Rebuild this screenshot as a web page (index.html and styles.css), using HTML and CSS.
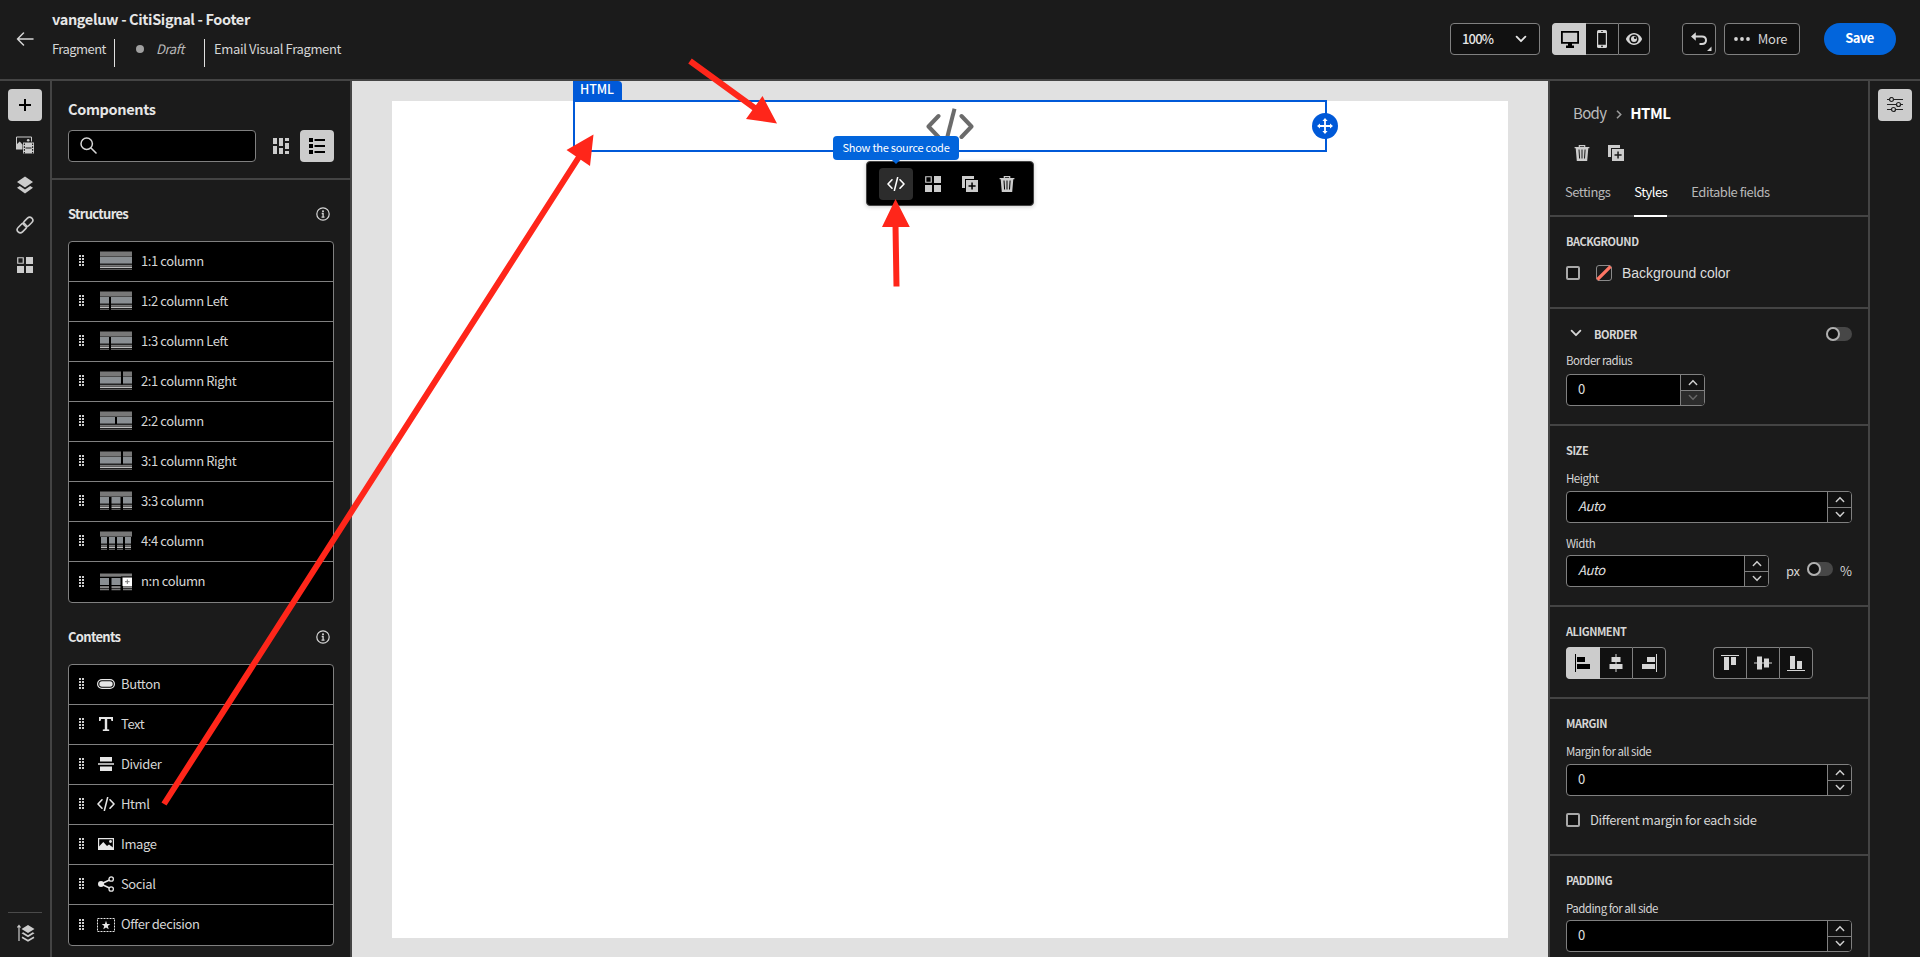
FILE: index.html
```html
<!DOCTYPE html>
<html lang="en">
<head>
<meta charset="utf-8">
<title>vangeluw - CitiSignal - Footer</title>
<link rel="stylesheet" href="styles.css">
</head>
<body>
<svg class="defs" aria-hidden="true">
  <symbol id="code" viewBox="0 0 18 14"><path d="M5 2.8 1 7l4 4.2M13 2.8 17 7l-4 4.2M10.6.6 7.4 13.4" fill="none" stroke="currentColor" stroke-width="1.6" stroke-linecap="round" stroke-linejoin="round"/></symbol>
  <symbol id="frags" viewBox="0 0 16 16"><path d="M.75.75h5.5v5.5H.75z" fill="none" stroke="currentColor" stroke-width="1.2"/><path d="M9 0h7v7H9zM0 9h7v7H0zM9 9h7v7H9z" fill="currentColor"/></symbol>
  <symbol id="dup" viewBox="0 0 16 16"><path fill="currentColor" d="M0 0h12v3H3v9H0z"/><path fill="currentColor" fill-rule="evenodd" d="M4 4h12v12H4zM9.3 6.5v2.8H6.5v1.5h2.8v2.8h1.5v-2.8h2.8V9.300h-2.800V6.500z"/></symbol>
  <symbol id="trash" viewBox="0 0 16 16"><path d="M5.300 2V.7h5.400V2" fill="none" stroke="currentColor" stroke-width="1.200"/><path fill="currentColor" fill-rule="evenodd" d="M.6 2h14.800v1.300h-1.100L13.200 16H2.800L1.700 3.300H.6zM4.500 4.500l.6 9h1l-.6-9zM7.500 4.500v9h1v-9zM10.600 4.500l-.6 9h1l.6-9z"/></symbol>
  <symbol id="chev" viewBox="0 0 12 8"><path d="m1.600 1.600 4.400 4.600 4.400-4.600" fill="none" stroke="currentColor" stroke-width="1.800" stroke-linecap="round" stroke-linejoin="round"/></symbol>
  <symbol id="info" viewBox="0 0 14 14"><circle cx="7" cy="7" r="6.200" fill="none" stroke="currentColor" stroke-width="1.200"/><circle cx="7" cy="4.200" r="1" fill="currentColor"/><path d="M5.700 6.500h1.400v3.500M5.500 10.200h3" fill="none" stroke="currentColor" stroke-width="1.300"/></symbol>
  <symbol id="grip" viewBox="0 0 5 11"><path fill="currentColor" d="M0 0h2v2H0zM3 0h2v2H3zM0 3h2v2H0zM3 3h2v2H3zM0 6h2v2H0zM3 6h2v2H3zM0 9h2v2H0zM3 9h2v2H3z"/></symbol>
  <symbol id="thumb" viewBox="0 0 32 19"><path fill="#787878" d="M0 .5h32v4.500H0z"/><path fill="#4a4a4a" d="M0 5h32v1H0zM0 12.500h32v1H0z"/><path fill="#8a8f93" d="M0 6h32v6.500H0z"/><path fill="#777" d="M0 14h32v1H0zM0 17.700h32v1H0z"/><path fill="#eee" d="M0 15.600h32v1.200H0z"/></symbol>
</svg>

<header class="topbar">
  <svg class="back" viewBox="0 0 18 14"><path d="M17 7H1.500M7.500 1l-6 6 6 6" fill="none" stroke="currentColor" stroke-width="1.500" stroke-linecap="round" stroke-linejoin="round"/></svg>
  <div class="heading">
    <h1 class="title">vangeluw - CitiSignal - Footer</h1>
    <div class="meta">
      <span class="meta-kind">Fragment</span>
      <span class="meta-state"><i class="dot"></i><em>Draft</em></span>
      <span class="meta-type">Email Visual Fragment</span>
    </div>
  </div>
  <div class="actions">
    <button class="btn zoom"><span>100%</span><svg width="12" height="8"><use href="#chev"/></svg></button>
    <div class="group views">
      <button class="seg on"><svg width="18" height="17" viewBox="0 0 18 17"><path fill="none" stroke="#000" stroke-width="1.800" d="M.9.9h16.200v11H.9z"/><path d="M7 12h4v2.500h2V17H5v-2.500h2z"/></svg></button>
      <button class="seg"><svg width="10" height="18" viewBox="0 0 10 18"><rect width="10" height="18" rx="1.500" fill="currentColor"/><path fill="#111" d="M1.200 3h7.600v11.800H1.200zM4 1.200h2v.8H4z"/><circle cx="5" cy="16.300" r=".9" fill="#111"/></svg></button>
      <button class="seg last"><svg width="16" height="12" viewBox="0 0 16 12"><path fill="currentColor" d="M8 0C3.500 0 0 4.500 0 6s3.500 6 8 6 8-4.500 8-6-3.500-6-8-6z"/><circle cx="8" cy="6" r="4.600" fill="#111"/><circle cx="8" cy="6" r="3" fill="currentColor"/><circle cx="9.200" cy="4.800" r="1.300" fill="#111"/></svg></button>
    </div>
    <button class="btn undo"><svg width="22" height="20" viewBox="0 0 22 20"><path d="M5 4.500h7c2.400 0 4 1.600 4 3.700 0 2.200-1.600 3.700-4 3.700H9.500" fill="none" stroke="currentColor" stroke-width="2"/><path fill="currentColor" d="M1 4.500 5.800.3v8.400zM21.500 14.500V19H17z"/></svg></button>
    <button class="btn more"><svg width="16" height="4" viewBox="0 0 16 4"><circle cx="2" cy="2" r="1.900" fill="currentColor"/><circle cx="8" cy="2" r="1.900" fill="currentColor"/><circle cx="14" cy="2" r="1.900" fill="currentColor"/></svg><span>More</span></button>
    <button class="save">Save</button>
  </div>
</header>

<main class="workspace">
  <nav class="rail">
    <button class="rail-on"><svg width="12" height="12" viewBox="0 0 12 12"><path d="M6 0v12M0 6h12" stroke="#000" stroke-width="2"/></svg></button>
    <svg class="rail-icon" viewBox="0 0 18 17"><path d="M.5 12.500V.5h15V5" fill="none" stroke="currentColor"/><circle cx="12.200" cy="3.700" r="1.300" fill="currentColor"/><path fill="currentColor" d="M0 8.500 3.700 5 6.500 8v5H0z"/><path fill="currentColor" d="M7 6h11v11H7z"/><path stroke="#1b1b1b" stroke-width="1" d="M9.500 11.500h6"/><path stroke="#1b1b1b" stroke-width="1.100" stroke-dasharray="1.600 1.200" d="M8.400 7V17M16.600 7V17"/></svg>
    <svg class="rail-icon" viewBox="0 0 18 18"><path fill="currentColor" d="M9 .5 17 6 9 11.500 1 6zM1 11.800l2.800-1.900L9 13.500l5.200-3.600 2.800 1.900-8 5.600z"/></svg>
    <svg class="rail-icon" viewBox="0 0 18 18"><g fill="none" stroke="currentColor" stroke-width="1.600" transform="rotate(-45 9 9)"><rect x="-.7" y="5.900" width="10.400" height="6.200" rx="3.100"/><rect x="8.300" y="5.900" width="10.400" height="6.200" rx="3.100"/></g></svg>
    <svg class="rail-icon small"><use href="#frags"/></svg>
    <div class="rail-foot"><svg width="18" height="18" viewBox="0 0 18 18"><path d="M2 17V2M.4 3.500 2 1.500l1.600 2" fill="none" stroke="currentColor" stroke-width="1.200"/><path fill="currentColor" d="M11 1l6.500 4-6.500 4-6.500-4zM4.500 9.300l1.800-1 4.700 2.900 4.700-2.900 1.800 1L11 13.200z"/><path d="m5 13.300 6 3.500 6-3.500" fill="none" stroke="currentColor" stroke-width="1.600"/></svg></div>
  </nav>

  <aside class="components">
    <div class="comp-head">
      <h2 class="title">Components</h2>
      <div class="search-row">
        <div class="search"><svg width="17" height="17" viewBox="0 0 17 17"><circle cx="6.700" cy="6.700" r="5.700" fill="none" stroke="currentColor" stroke-width="1.500"/><path d="m11 11 5 5" stroke="currentColor" stroke-width="1.600" stroke-linecap="round"/></svg></div>
        <svg class="grid-icon" viewBox="0 0 16 16"><path fill="currentColor" d="M0 0h4v6H0zM0 8h4v8H0zM6 0h4v8H6zM6 10h4v6H6zM12 0h4v3h-4zM12 5h4v6h-4zM12 13h4v3h-4z"/></svg>
        <button class="list-btn"><svg width="16" height="16" viewBox="0 0 16 16"><path d="M0 0h4v4H0zM0 6h4v4H0zM0 12h4v4H0zM5.500 1H16v2H5.500zM5.500 7H16v2H5.500zM5.500 13H16v2H5.500z"/></svg></button>
      </div>
    </div>
    <div class="sect-head"><h3>Structures</h3><svg width="14" height="14"><use href="#info"/></svg></div>
    <ul class="list">
      <li><svg class="grip"><use href="#grip"/></svg><svg class="thumb"><use href="#thumb"/></svg>1:1 column</li>
      <li><svg class="grip"><use href="#grip"/></svg><svg class="thumb"><use href="#thumb"/><path d="M9 6h2v13H9z"/></svg>1:2 column Left</li>
      <li><svg class="grip"><use href="#grip"/></svg><svg class="thumb"><use href="#thumb"/><path d="M9 6h2v13H9z"/></svg>1:3 column Left</li>
      <li><svg class="grip"><use href="#grip"/></svg><svg class="thumb"><use href="#thumb"/><path d="M21 0h2v13.500h-2z"/></svg>2:1 column Right</li>
      <li><svg class="grip"><use href="#grip"/></svg><svg class="thumb"><use href="#thumb"/><path d="M15 6h2v7h-2z"/></svg>2:2 column</li>
      <li><svg class="grip"><use href="#grip"/></svg><svg class="thumb"><use href="#thumb"/><path d="M21 0h2v13.500h-2z"/></svg>3:1 column Right</li>
      <li><svg class="grip"><use href="#grip"/></svg><svg class="thumb"><use href="#thumb"/><path d="M9 6h2.500v13H9zM20.500 6H23v13h-2.500z"/></svg>3:3 column</li>
      <li><svg class="grip"><use href="#grip"/></svg><svg class="thumb"><use href="#thumb"/><path d="M0 6h1v13H0zM7 6h2v13H7zM15 6h2v13h-2zM23 6h2v13h-2zM31 6h1v13h-1z"/></svg>4:4 column</li>
      <li><svg class="grip"><use href="#grip"/></svg><svg class="thumb" viewBox="0 0 32 19"><path fill="#777" d="M0 1.500h32v1H0zM0 3.500h32v1.200H0zM0 14h9v1H0zM11.500 14h9v1h-9zM23 14h9v1h-9zM0 17h9v1.200H0zM11.500 17h9v1.200h-9zM23 17h9v1.200h-9z"/><path fill="#bbb" d="M0 2.500h32v1H0zM0 15.300h9v1H0zM11.500 15.300h9v1h-9zM23 15.300h9v1h-9z"/><path fill="#8a8f93" d="M0 6h9v7H0zM11.500 6h9v7h-9z"/><path d="M21 4.500h11V6H21z"/><path fill="#fff" d="M22.500 5.500H32v8.500h-9.500z"/><path stroke="#777" d="M27.300 7.500v4.500M25 9.700h4.600"/></svg>n:n column</li>
    </ul>
    <div class="sect-head"><h3>Contents</h3><svg width="14" height="14"><use href="#info"/></svg></div>
    <ul class="list contents">
      <li><svg class="grip"><use href="#grip"/></svg><svg class="ico" viewBox="0 0 18 16"><rect x=".6" y="3.600" width="16.800" height="8.800" rx="4.400" fill="none" stroke="currentColor" stroke-width="1.200"/><rect x="2.300" y="5.300" width="13.400" height="5.400" rx="2.700" fill="currentColor"/></svg>Button</li>
      <li><svg class="grip"><use href="#grip"/></svg><svg class="ico" viewBox="0 0 18 16"><path fill="currentColor" d="M2 1h14v4h-1.500l-.6-2h-3.700v10.200l2 .4V15H5.800v-1.400l2-.4V3H4.100l-.6 2H2z"/></svg>Text</li>
      <li><svg class="grip"><use href="#grip"/></svg><svg class="ico" viewBox="0 0 18 16"><path fill="currentColor" d="M3 1h12v4.500H3zM1 7.200h16v1.600H1zM3 10.500h12V15H3z"/></svg>Divider</li>
      <li><svg class="grip"><use href="#grip"/></svg><svg class="ico" viewBox="0 -1 18 16"><use href="#code" width="18" height="14"/></svg>Html</li>
      <li><svg class="grip"><use href="#grip"/></svg><svg class="ico" viewBox="0 0 18 16"><path d="M1.600 2.600h14.800v10.800H1.600z" fill="none" stroke="currentColor" stroke-width="1.200"/><circle cx="13.500" cy="5.500" r="1.400" fill="currentColor"/><path fill="currentColor" d="M2 10.500 6.300 6l3.700 4 2-1.500 4 3V13H2z"/></svg>Image</li>
      <li><svg class="grip"><use href="#grip"/></svg><svg class="ico" viewBox="0 0 18 16"><circle cx="4" cy="8" r="3" fill="currentColor"/><path d="M4 8l10-4.700M4 8l10 4.700" stroke="currentColor" stroke-width="1.500"/><circle cx="14.200" cy="3" r="2.200" fill="#000" stroke="currentColor" stroke-width="1.300"/><circle cx="14.200" cy="13" r="2.200" fill="#000" stroke="currentColor" stroke-width="1.300"/></svg>Social</li>
      <li><svg class="grip"><use href="#grip"/></svg><svg class="ico" viewBox="0 0 18 16"><path d="M.5 1.500h17v13H.5z" fill="none" stroke="currentColor" stroke-dasharray="2 1"/><path fill="currentColor" d="m9 3.800 1.100 3.100 3.200.1-2.500 2 .9 3.200L9 10.400l-2.700 1.800.9-3.200-2.500-2 3.200-.1z"/></svg>Offer decision</li>
    </ul>
  </aside>

  <section class="canvas">
    <div class="sheet">
      <div class="block">
        <span class="block-tag">HTML</span>
        <svg class="block-code" viewBox="0 0 48 38"><path d="M12.500 8 2.500 18.500 12.500 29M35.500 8l10 10.500L35.500 29" fill="none" stroke="#6b6b6b" stroke-width="4" stroke-linecap="round" stroke-linejoin="round"/><path d="M28.500.8 19.500 36" fill="none" stroke="#6b6b6b" stroke-width="4"/></svg>
        <span class="move"><svg width="16" height="16" viewBox="0 0 16 16"><path d="M8 2v12M2 8h12" stroke="#fff" stroke-width="1.800"/><path fill="#fff" d="M8 0l2.600 3H5.400zM8 16l2.600-3H5.400zM0 8l3-2.600v5.200zM16 8l-3-2.600v5.200z"/></svg></span>
        <div class="tools">
          <span class="tool on"><svg width="18" height="14"><use href="#code"/></svg></span>
          <span class="tool"><svg width="16" height="16"><use href="#frags"/></svg></span>
          <span class="tool"><svg width="16" height="16"><use href="#dup"/></svg></span>
          <span class="tool"><svg width="16" height="16"><use href="#trash"/></svg></span>
        </div>
        <div class="tip">Show the source code</div>
      </div>
    </div>
  </section>

  <aside class="props">
    <div class="props-head">
      <div class="crumbs"><span>Body</span><svg width="6" height="9" viewBox="0 0 6 9"><path d="m1 .8 3.700 3.700L1 8.200" fill="none" stroke="#999" stroke-width="1.600"/></svg><b>HTML</b></div>
      <div class="head-icons"><svg width="16" height="16"><use href="#trash"/></svg><svg width="16" height="16"><use href="#dup"/></svg></div>
      <div class="tabs"><span>Settings</span><span class="tab-on">Styles</span><span>Editable fields</span></div>
    </div>

    <div class="prop background">
      <h4>BACKGROUND</h4>
      <div class="check-row"><i class="check"></i><svg class="swatch" viewBox="0 0 16 16"><rect x=".5" y=".5" width="15" height="15" rx="2.500" fill="#1b1b1b" stroke="#8a8a8a"/><path d="M2.500 13.500 13.500 2.500" stroke="#ff7664" stroke-width="3.200" stroke-linecap="square"/></svg><span class="bg-label">Background color</span></div>
    </div>

    <div class="prop border">
      <div class="fold"><svg width="12" height="8"><use href="#chev"/></svg><h4>BORDER</h4><i class="toggle"></i></div>
      <label>Border radius</label>
      <div class="num narrow"><span>0</span><div class="step"><i><svg class="up"><use href="#chev"/></svg></i><i class="off"><svg><use href="#chev"/></svg></i></div></div>
    </div>

    <div class="prop size">
      <h4>SIZE</h4>
      <label>Height</label>
      <div class="num"><em>Auto</em><div class="step"><i><svg class="up"><use href="#chev"/></svg></i><i><svg><use href="#chev"/></svg></i></div></div>
      <label>Width</label>
      <div class="width-row">
        <div class="num mid"><em>Auto</em><div class="step"><i><svg class="up"><use href="#chev"/></svg></i><i><svg><use href="#chev"/></svg></i></div></div>
        <span class="unit">px</span><i class="toggle"></i><span class="unit pct">%</span>
      </div>
    </div>

    <div class="prop alignment">
      <h4>ALIGNMENT</h4>
      <div class="align-row">
        <div class="group horiz">
          <button class="seg on"><svg width="18" height="18" viewBox="0 0 18 18"><path d="M1 0h1v18H1zM3 3h8v5H3zM3 10h13v5H3z"/></svg></button>
          <button class="seg"><svg width="18" height="18" viewBox="0 0 18 18"><path fill="currentColor" d="M8.500 0h1v18h-1zM4.500 3h9v5h-9zM2.500 10h13v5h-13z"/></svg></button>
          <button class="seg last"><svg width="18" height="18" viewBox="0 0 18 18"><path fill="currentColor" d="M16 0h1v18h-1zM7 3h8v5H7zM2 10h13v5H2z"/></svg></button>
        </div>
        <div class="group vert">
          <button class="seg"><svg width="18" height="18" viewBox="0 0 18 18"><path fill="currentColor" d="M0 1h18v1H0zM3 3h5v13H3zM10 3h5v8h-5z"/></svg></button>
          <button class="seg"><svg width="18" height="18" viewBox="0 0 18 18"><path fill="currentColor" d="M0 8.500h18v1H0zM3 2.500h5v13H3zM10 4.500h5v9h-5z"/></svg></button>
          <button class="seg last"><svg width="18" height="18" viewBox="0 0 18 18"><path fill="currentColor" d="M0 16h18v1H0zM3 2h5v13H3zM10 7h5v8h-5z"/></svg></button>
        </div>
      </div>
    </div>

    <div class="prop margin">
      <h4>MARGIN</h4>
      <label>Margin for all side</label>
      <div class="num"><span>0</span><div class="step"><i><svg class="up"><use href="#chev"/></svg></i><i><svg><use href="#chev"/></svg></i></div></div>
      <div class="check-row"><i class="check"></i><span class="each">Different margin for each side</span></div>
    </div>

    <div class="prop padding">
      <h4>PADDING</h4>
      <label>Padding for all side</label>
      <div class="num"><span>0</span><div class="step"><i><svg class="up"><use href="#chev"/></svg></i><i><svg><use href="#chev"/></svg></i></div></div>
    </div>
  </aside>

  <nav class="rail right">
    <button class="rail-on"><svg width="16" height="16" viewBox="0 0 16 16"><path d="M0 2.500h16M0 7.500h16M0 12.500h16" stroke="#222" stroke-width="1.200"/><g fill="#ccc" stroke="#222" stroke-width="1.200"><circle cx="4.500" cy="2.500" r="2"/><circle cx="11.500" cy="7.500" r="2"/><circle cx="6.500" cy="12.500" r="2"/></g></svg></button>
  </nav>
</main>

<svg class="arrows" viewBox="0 0 1920 957">
  <g stroke="#ff261a" stroke-width="6"><path d="M690 61 756 109M164 804 579 157M896.500 286.500 895.500 225"/></g>
  <g fill="#ff261a"><path d="M777 123.500 762.500 96 746 119zM593.500 134.500 566.500 150 590 166zM895.500 199 882 227h27.800z"/></g>
</svg>
</body>
</html>
```
FILE: styles.css
```css
*, *::before, *::after { box-sizing: border-box; }

body {
  margin: 0;
  width: 1920px;
  height: 957px;
  overflow: hidden;
  position: relative;
  background: #1b1b1b;
  color: #d6d6d6;
  font: 400 13px/20px "Noto Sans CJK SC", "Noto Sans", sans-serif;
  letter-spacing: -0.4px;
  white-space: nowrap;
}

h1, h2, h3, h4, ul { margin: 0; padding: 0; }
ul { list-style: none; }
svg { display: block; flex: none; }
button {
  padding: 0;
  border: 0;
  font: inherit;
  letter-spacing: inherit;
  color: inherit;
  display: flex;
  align-items: center;
  justify-content: center;
  flex: none;
}
.defs { position: absolute; width: 0; height: 0; }

/* Top bar */
.topbar {
  display: flex;
  height: 81px;
  padding-left: 16px;
  border-bottom: 2px solid #444;
}
.back { width: 18px; height: 14px; margin-top: 32px; }
.heading { margin-left: 18px; padding-top: 9px; }
.title {
  font-size: 14.5px;
  line-height: 20px;
  font-weight: 700;
  letter-spacing: -0.35px;
  color: #e6e6e6;
}
.meta { display: flex; margin-top: 10px; line-height: 20px; height: 28px; }
.meta-kind { width: 63px; border-right: 1px solid #e0e0e0; letter-spacing: -0.54px; }
.meta-state {
  display: flex;
  align-items: flex-start;
  width: 90px;
  padding-left: 21px;
  border-right: 1px solid #e0e0e0;
  color: #b8b8b8;
}
.dot { width: 8px; height: 8px; margin: 6px 12px 0 0; border-radius: 50%; background: #a0a0a0; }
.meta-type { padding-left: 9px; letter-spacing: -0.35px; }
.actions { display: flex; margin-left: auto; padding: 23px 24px 0 0; }
.btn { height: 32px; border: 1px solid #808080; border-radius: 4px; background: #111; }
.zoom {
  width: 90px;
  padding: 0 12px 0 11px;
  justify-content: space-between;
  color: #e6e6e6;
  font-weight: 500;
  letter-spacing: -0.8px;
}
.group { display: flex; height: 32px; }
.seg {
  width: 33px;
  background: #111;
  border: 1px solid #808080;
  border-right-width: 0;
}
.seg:first-child { border-radius: 4px 0 0 4px; }
.seg.last { border-right-width: 1px; border-radius: 0 4px 4px 0; }
.seg.on { width: 34px; background: #ccc; border-color: #ccc; }
.seg.on + .seg { width: 32px; border-left-width: 0; }
.views { margin: 0 32px 0 12px; }
.views .last { width: 32px; }
.horiz .last, .vert .last { width: 34px; }
.horiz .on { padding-right: 1px; }
.undo { width: 34px; padding: 6px 0 0 3px; }
.more { width: 76px; margin-left: 8px; padding-right: 3px; gap: 8px; letter-spacing: -0.2px; }
.save {
  width: 72px;
  height: 32px;
  margin-left: 24px;
  padding: 0 1px 3px 0;
  border-radius: 16px;
  background: #0265dc;
  color: #fff;
  font-weight: 700;
  letter-spacing: -0.5px;
}

/* Workspace columns */
.workspace { display: flex; height: 876px; }
.rail {
  display: flex;
  flex-direction: column;
  align-items: center;
  width: 52px;
  padding-top: 8px;
  border-right: 2px solid #444;
  color: #ccc;
}
.rail.right { width: 50px; border: 0; }
.rail-on { width: 34px; height: 32px; border-radius: 4px; background: #ccc; }
.rail-icon { width: 18px; height: 18px; margin-top: 22px; }
.rail-on + .rail-icon { margin-top: 15px; }
.rail-icon.small { width: 16px; height: 16px; margin-top: 23px; }
.rail-foot {
  width: 34px;
  height: 45px;
  margin-top: auto;
  padding: 11px 0 0 9px;
  border-top: 1px solid #4a4a4a;
}

/* Component library */
.components { width: 300px; border-right: 2px solid #444; flex: none; }
.comp-head { padding: 18px 16px 16px; border-bottom: 2px solid #444; }
.search-row { display: flex; align-items: center; margin-top: 11px; }
.search {
  width: 188px;
  height: 32px;
  padding: 6px 11px;
  border: 1px solid #808080;
  border-radius: 4px;
  background: #000;
}
.grid-icon { width: 16px; height: 16px; margin: 0 11px 0 17px; color: #ccc; }
.list-btn { width: 34px; height: 32px; border-radius: 4px; background: #ccc; }
.sect-head {
  display: flex;
  align-items: center;
  justify-content: space-between;
  height: 20px;
  margin: 24px 20px 17px 16px;
}
.sect-head h3 { font-size: 13px; font-weight: 700; letter-spacing: -0.7px; color: #e6e6e6; }
.list {
  margin: 0 16px;
  border: 1px solid #808080;
  border-radius: 4px;
  background: #000;
}
.list li {
  display: flex;
  align-items: center;
  height: 40px;
  padding: 0 0 2px 10px;
  border-bottom: 1px solid #808080;
  line-height: 21px;
}
.list li:last-child { border-bottom: 0; padding-bottom: 3px; }
.list li:last-child svg { margin-top: 2px; }
.grip { width: 5px; height: 11px; margin-right: 16px; color: #ccc; }
.thumb { width: 32px; height: 19px; margin-right: 9px; }
.contents .grip { margin-right: 13px; }
.ico { width: 18px; height: 16px; margin-right: 6px; color: #e6e6e6; }

/* Canvas */
.canvas { width: 1196px; padding: 20px 40px 19px; background: #e1e1e1; flex: none; }
.sheet { height: 837px; background: #fff; }
.block {
  position: relative;
  top: -1px;
  width: 754px;
  height: 52px;
  margin: 0 auto;
  border: 2px solid #0059d8;
}
.block-tag {
  position: absolute;
  left: -2px;
  top: -21px;
  width: 49px;
  height: 20px;
  padding-left: 7px;
  border-radius: 0 4px 0 0;
  background: #0059d8;
  color: #fff;
  font-size: 12.5px;
  font-weight: 500;
  line-height: 16px;
  letter-spacing: -0.1px;
}
.block-code { position: absolute; left: 351px; top: 6px; width: 48px; height: 38px; }
.move {
  position: absolute;
  right: -13px;
  top: 11px;
  width: 26px;
  height: 26px;
  padding: 5px;
  border-radius: 50%;
  background: #0059d8;
}
.tools {
  position: absolute;
  left: 291px;
  top: 59px;
  display: flex;
  gap: 3px;
  width: 168px;
  height: 45px;
  padding: 6px 0 0 12px;
  border: 1px solid #444;
  border-radius: 4px;
  background: #000;
  color: #ccc;
  box-shadow: 0 1px 4px rgba(0, 0, 0, 0.2);
}
.tool { display: flex; align-items: center; justify-content: center; flex: none; width: 34px; height: 32px; border-radius: 4px; }
.tool.on { background: #2c2c2c; color: #fff; }
.tip {
  position: absolute;
  left: 258px;
  top: 34px;
  width: 126px;
  height: 24px;
  border-radius: 4px;
  background: #0265dc;
  color: #fff;
  font-size: 11px;
  line-height: 23px;
  letter-spacing: -0.25px;
  text-align: center;
}
.tip::after {
  content: "";
  position: absolute;
  left: 59px;
  top: 24px;
  border: 4px solid transparent;
  border-top-color: #0265dc;
  border-bottom: 0;
}

/* Properties */
.props {
  width: 322px;
  border: solid #444;
  border-width: 0 2px;
  overflow: hidden;
  flex: none;
}
.props-head { height: 136px; padding: 22px 16px 0 15px; border-bottom: 2px solid #444; }
.crumbs { display: flex; align-items: center; padding-left: 8px; font-size: 15px; letter-spacing: -0.7px; color: #bbb; }
.crumbs svg { margin: 2px 8px 0 10px; }
.crumbs b { color: #fff; letter-spacing: -0.5px; }
.head-icons { display: flex; gap: 18px; margin: 22px 0 0 9px; color: #ccc; }
.tabs { display: flex; gap: 24px; margin-top: 20px; color: #b8b8b8; }
.tabs span { height: 36px; padding-top: 1px; letter-spacing: -0.5px; }
.tabs .tab-on { color: #fff; border-bottom: 2px solid #fff; }

.prop { padding: 16px 16px 0; border-bottom: 2px solid #444; }
.prop h4 { font-size: 11px; line-height: 16px; font-weight: 700; letter-spacing: -0.45px; color: #d6d6d6; }
.prop label { display: block; margin-top: 12px; font-size: 11.5px; line-height: 16px; letter-spacing: -0.5px; }
.background { height: 92px; }
.border { height: 117px; padding-top: 17px; }
.size { height: 181px; }
.alignment { height: 92px; }
.margin { height: 157px; }
.padding { height: 110px; border: 0; }

.check-row { display: flex; align-items: center; height: 16px; margin-top: 16px; }
.check { width: 14px; height: 14px; border: 2px solid #a8a8a8; border-radius: 2px; background: #111; }
.swatch { width: 16px; height: 16px; margin: 0 10px 0 16px; }
.bg-label { font: 14px/16px "Liberation Sans", sans-serif; letter-spacing: -0.05px; color: #ddd; }
.each { margin-left: 10px; padding-bottom: 1px; }
.fold { display: flex; align-items: center; height: 16px; }
.fold svg { margin: 0 12px 2px 4px; }
.fold .toggle { margin: 0 0 1px auto; }
.toggle { display: block; flex: none; width: 26px; height: 14px; border-radius: 7px; background: #474747; }
.toggle::before {
  content: "";
  display: block;
  width: 14px;
  height: 14px;
  border: 2px solid #b0b0b0;
  border-radius: 50%;
  background: #111;
}
.border label { margin-top: 10px; }
.num {
  display: flex;
  justify-content: space-between;
  flex: none;
  width: 286px;
  height: 32px;
  margin-top: 5px;
  padding-left: 11px;
  border: 1px solid #808080;
  border-radius: 4px;
  background: #000;
  line-height: 28px;
  overflow: hidden;
  color: #e0e0e0;
}
.narrow { width: 139px; margin-top: 6px; }
.mid { width: 203px; margin-top: 0; }
.step { width: 25px; margin-right: -1px; border-left: 1px solid #808080; background: #111; }
.step i { display: flex; align-items: center; justify-content: center; height: 15px; padding-right: 1px; }
.step i + i { height: 16px; border-top: 1px solid #808080; padding-bottom: 2px; }
.step svg { width: 10px; height: 7px; color: #ccc; }
.step .off { background: #2c2c2c; }
.step .off svg { color: #666; }
.step .up { transform: rotate(180deg); }
.width-row { display: flex; align-items: center; margin-top: 4px; }
.unit { width: 21px; margin-left: 17px; padding-bottom: 1px; }
.width-row .toggle { margin-bottom: 4px; }
.pct { width: 12px; margin-left: 7px; }
.align-row { display: flex; gap: 47px; margin-top: 8px; }
.padding .num { margin-top: 4px; }

/* Annotation arrows */
.arrows { position: absolute; left: 0; top: 0; width: 1920px; height: 957px; pointer-events: none; }
```
